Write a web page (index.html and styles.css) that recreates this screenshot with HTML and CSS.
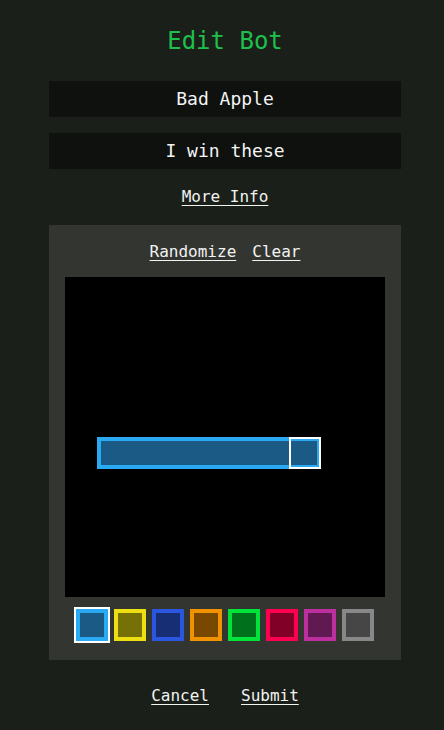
FILE: index.html
```html
<!DOCTYPE html>
<html lang="en">
<head>
<meta charset="utf-8">
<title>Edit Bot</title>
<link rel="stylesheet" href="styles.css">
</head>
<body>
<main class="page">
  <h1 class="title">Edit Bot</h1>
  <input class="field" type="text" value="Bad Apple">
  <input class="field" type="text" value="I win these">
  <div class="more"><a href="#" class="link">More Info</a></div>
  <section class="panel">
    <div class="tools">
      <a href="#" class="link">Randomize</a>
      <a href="#" class="link">Clear</a>
    </div>
    <div class="board">
      <div class="snake"></div>
      <div class="head"></div>
    </div>
    <div class="swatches">
      <span class="swatch s-blue selected"></span>
      <span class="swatch s-yellow"></span>
      <span class="swatch s-navy"></span>
      <span class="swatch s-orange"></span>
      <span class="swatch s-green"></span>
      <span class="swatch s-red"></span>
      <span class="swatch s-purple"></span>
      <span class="swatch s-gray"></span>
    </div>
  </section>
  <div class="actions">
    <a href="#" class="link">Cancel</a>
    <a href="#" class="link">Submit</a>
  </div>
</main>
</body>
</html>
```
FILE: styles.css
```css
html, body {
  margin: 0;
  padding: 0;
  background: #1a1f19;
  height: 100%;
}
body {
  font-family: "DejaVu Sans Mono", "Liberation Mono", monospace;
  color: #f2f2f2;
  overflow: hidden;
}
.page {
  width: 352px;
  margin-left: 49px;
  padding-top: 24px;
  display: flex;
  flex-direction: column;
}
.title {
  margin: 0 0 23px;
  font-size: 24px;
  line-height: 34px;
  font-weight: normal;
  color: #1fbf4c;
  text-align: center;
}
.field {
  display: block;
  box-sizing: border-box;
  width: 352px;
  height: 36px;
  margin: 0 0 16px;
  padding: 0 0 1px;
  border: none;
  outline: none;
  background: #0e110d;
  color: #f4f4f4;
  font-family: inherit;
  font-size: 18px;
  text-align: center;
}
.more {
  margin-top: 1px;
  text-align: center;
  line-height: 22px;
  margin-bottom: 17px;
}
.link {
  color: #f2f2f2;
  font-size: 16px;
  text-decoration: underline;
  text-underline-offset: 3px;
}
.panel {
  background: #323530;
  padding: 17px 16px 17px;
  display: flex;
  flex-direction: column;
  align-items: center;
}
.tools {
  display: flex;
  gap: 16px;
  line-height: 20px;
  margin-bottom: 15px;
}
.board {
  width: 320px;
  height: 320px;
  background: #000;
  display: grid;
  grid-template-columns: repeat(10, 32px);
  grid-template-rows: repeat(10, 32px);
}
.snake {
  grid-column: 2 / 9;
  grid-row: 6;
  box-sizing: border-box;
  border: 4px solid #29aaf2;
  background: #1a5a85;
}
.head {
  grid-column: 8;
  grid-row: 6;
  box-sizing: border-box;
  border: 2px solid #ffffff;
}
.swatches {
  display: flex;
  gap: 6px;
  align-items: center;
  height: 36px;
  margin-top: 10px;
}
.swatch {
  box-sizing: border-box;
  width: 32px;
  height: 32px;
  border: 4px solid;
}
.swatch.selected {
  outline: 2px solid #ffffff;
}
.s-blue { border-color: #29aaf2; background: #1a5a85; }
.s-yellow { border-color: #eedf12; background: #767008; }
.s-navy { border-color: #2a56e0; background: #172d74; }
.s-orange { border-color: #f19300; background: #784800; }
.s-green { border-color: #00e33a; background: #00701c; }
.s-red { border-color: #ff0050; background: #800028; }
.s-purple { border-color: #bd2f9e; background: #611a51; }
.s-gray { border-color: #888888; background: #464646; }
.actions {
  display: flex;
  justify-content: center;
  gap: 32px;
  margin-top: 26px;
  line-height: 20px;
}
```
